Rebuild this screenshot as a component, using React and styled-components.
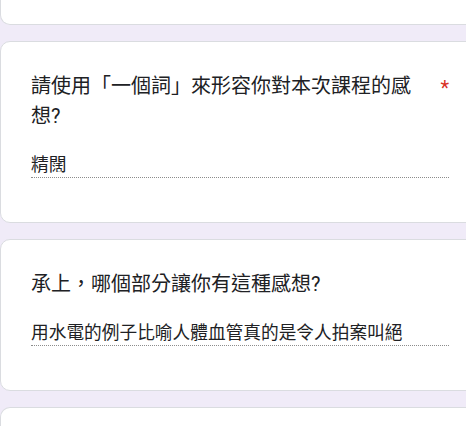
import styled, { createGlobalStyle } from "styled-components";

const GlobalStyle = createGlobalStyle`
  html, body {
    margin: 0;
    padding: 0;
    background: #f0ebf8;
    overflow: hidden;
  }
  body {
    font-family: Roboto, "Noto Sans CJK TC", "Noto Sans", sans-serif;
    color: #202124;
  }
`;

const Page = styled.main`
  display: flex;
  flex-direction: column;
  gap: 16px;
  height: 426px;
`;

const Card = styled.section`
  box-sizing: border-box;
  width: 480px;
  flex-shrink: 0;
  background: #fff;
  border: 1px solid #dadce0;
  border-radius: 10px;
  padding: 29px 30px 44px;
`;

const EdgeCard = styled(Card)`
  padding: 0;
  height: ${(props) => (props.top ? "25px" : "30px")};
  border-top: ${(props) => (props.top ? "none" : "1px solid #dadce0")};
  border-bottom: ${(props) => (props.top ? "1px solid #dadce0" : "none")};
  border-radius: ${(props) => (props.top ? "0 0 10px 10px" : "10px 10px 0 0")};
`;

const TitleRow = styled.div`
  display: flex;
  align-items: flex-start;
`;

const Title = styled.h2`
  flex: 1;
  margin: 0;
  font-size: 20px;
  line-height: 30px;
  font-weight: 400;
  color: #202124;
  letter-spacing: 0;
`;

const Required = styled.span`
  padding-left: 24px;
  padding-top: 2px;
  font-family: Roboto, sans-serif;
  font-size: 20px;
  line-height: 30px;
  color: #d93025;
`;

const Answer = styled.div`
  margin-top: 22px;
  font-size: 17.7px;
  line-height: 24px;
  color: #202124;
  border-bottom: 1px dotted #8c8c8c;
`;

function Question({ title, required, answer }) {
  return (
    <Card>
      <TitleRow>
        <Title>{title}</Title>
        {required && <Required>*</Required>}
      </TitleRow>
      <Answer>{answer}</Answer>
    </Card>
  );
}

export default function App() {
  return (
    <>
      <GlobalStyle />
      <Page>
        <EdgeCard top />
        <Question
          title="請使用「一個詞」來形容你對本次課程的感想?"
          required
          answer="精闊"
        />
        <Question
          title="承上，哪個部分讓你有這種感想?"
          answer="用水電的例子比喻人體血管真的是令人拍案叫絕"
        />
        <EdgeCard />
      </Page>
    </>
  );
}
